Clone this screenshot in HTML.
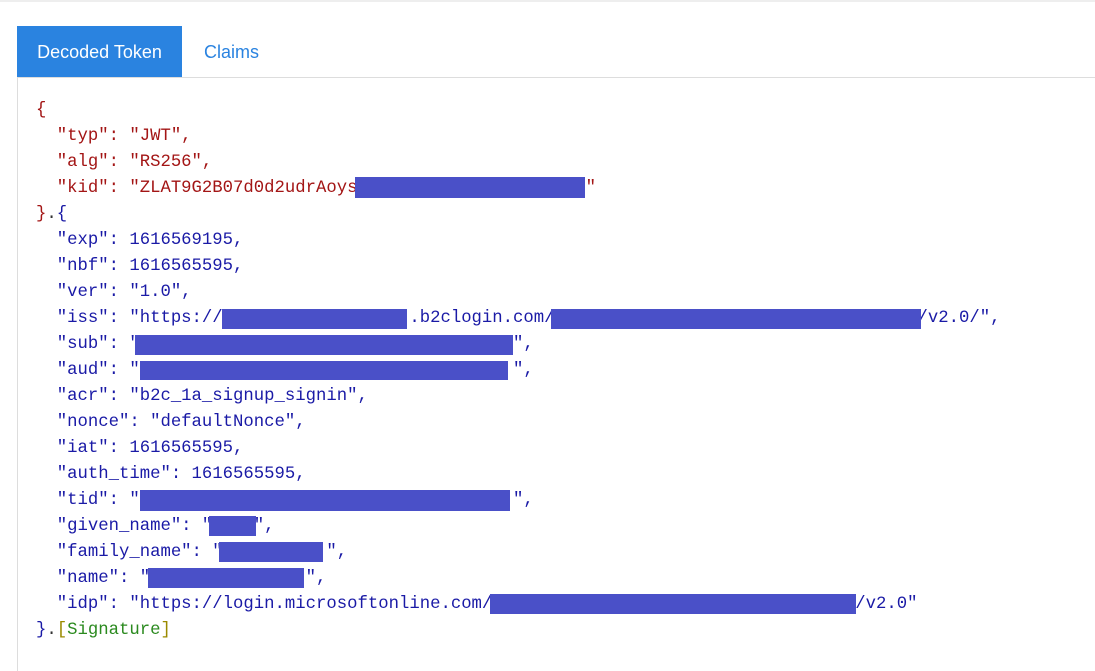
<!DOCTYPE html>
<html><head><style>
html,body{margin:0;padding:0;background:#fff;width:1095px;height:671px;overflow:hidden;position:relative;font-family:"Liberation Sans",sans-serif}
.top{position:absolute;left:0;top:0;width:1095px;height:2px;background:#eee}
.tab{position:absolute;top:26px;height:51px;line-height:53px;font-size:18px}
.t1{left:17px;width:165px;background:#2a83e0;color:#fff;text-align:center}
.t2{left:204px;color:#2a83e0}
.hl{position:absolute;left:17px;top:77px;width:1078px;height:1px;background:#ddd}
.vl{position:absolute;left:17px;top:77px;width:1px;height:594px;background:#ddd}
pre{position:absolute;left:36px;top:98px;margin:0;font-family:"Liberation Mono",monospace;font-size:17.3px;line-height:26px;color:#1a1aa6}
.r{color:#a31515}.d{color:#333}.g{color:#2b8a1f}.y{color:#9a8a00}
.x{position:absolute;background:#4a50c8}
</style></head><body>
<div class="top"></div>
<div class="tab t1">Decoded Token</div>
<div class="tab t2">Claims</div>
<div class="hl"></div><div class="vl"></div>
<pre><span class="r">{
  "typ": "JWT",
  "alg": "RS256",
  "kid": "ZLAT9G2B07d0d2udrAoys                      "
}</span><span class="d">.</span>{
  "exp": 1616569195,
  "nbf": 1616565595,
  "ver": "1.0",
  "iss": "https://                  .b2clogin.com/                                   /v2.0/",
  "sub": "                                    ",
  "aud": "                                    ",
  "acr": "b2c_1a_signup_signin",
  "nonce": "defaultNonce",
  "iat": 1616565595,
  "auth_time": 1616565595,
  "tid": "                                    ",
  "given_name": "    ",
  "family_name": "          ",
  "name": "               ",
  "idp": "https://login.microsoftonline.com/                                   /v2.0"
}<span class="d">.</span><span class="y">[</span><span class="g">Signature</span><span class="y">]</span></pre>
<div class="x" style="left:355px;top:177px;width:230px;height:21px"></div>
<div class="x" style="left:222px;top:309px;width:185px;height:20px"></div>
<div class="x" style="left:551px;top:309px;width:370px;height:20px"></div>
<div class="x" style="left:135px;top:335px;width:378px;height:20px"></div>
<div class="x" style="left:140px;top:361px;width:368px;height:19px"></div>
<div class="x" style="left:140px;top:490px;width:370px;height:21px"></div>
<div class="x" style="left:209px;top:516px;width:47px;height:20px"></div>
<div class="x" style="left:219px;top:542px;width:104px;height:20px"></div>
<div class="x" style="left:148px;top:568px;width:156px;height:20px"></div>
<div class="x" style="left:490px;top:594px;width:366px;height:20px"></div>
</body></html>
